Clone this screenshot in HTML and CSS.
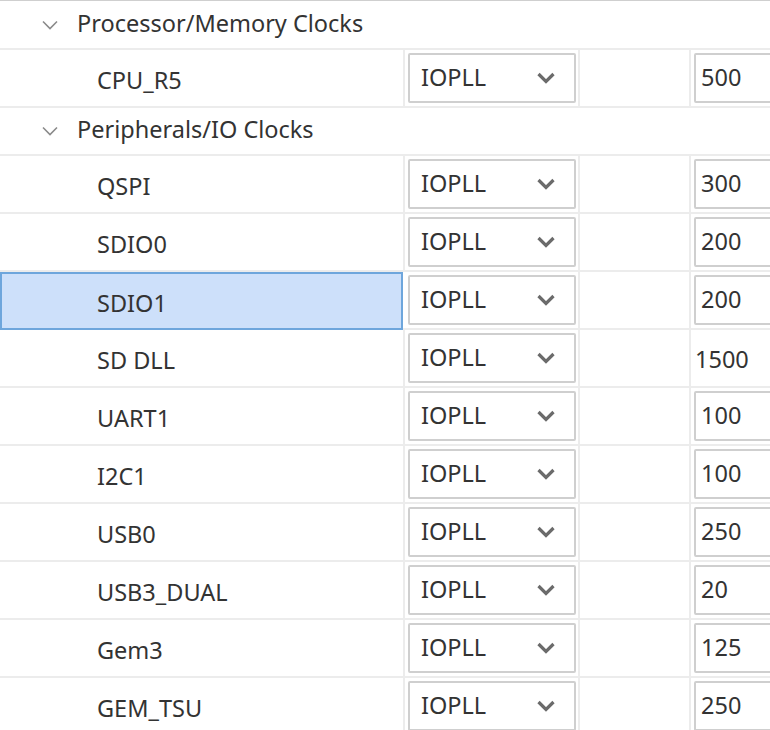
FILE: index.html
```html
<!DOCTYPE html>
<html>
<head>
<meta charset="utf-8">
<link rel="stylesheet" href="styles.css">
</head>
<body>
<div class="tree">
  <div class="section first">
    <svg class="twisty" width="16" height="10" viewBox="0 0 16 10"><path d="M1 1.5 L8 8.5 L15 1.5" fill="none" stroke="#8a8a8a" stroke-width="1.6"/></svg>
    <span>Processor/Memory Clocks</span>
  </div>
  <div class="row">
    <div class="cell name">CPU_R5</div>
    <div class="cell src"><div class="combo"><span>IOPLL</span><svg class="arrow" width="20" height="12" viewBox="0 0 20 12"><path d="M2.5 2 L10 9.5 L17.5 2" fill="none" stroke="#6b6b6b" stroke-width="3.2"/></svg></div></div>
    <div class="cell gap"></div>
    <div class="cell val"><div class="box">500</div></div>
  </div>
  <div class="section">
    <svg class="twisty" width="16" height="10" viewBox="0 0 16 10"><path d="M1 1.5 L8 8.5 L15 1.5" fill="none" stroke="#8a8a8a" stroke-width="1.6"/></svg>
    <span>Peripherals/IO Clocks</span>
  </div>
  <div class="row">
    <div class="cell name">QSPI</div>
    <div class="cell src"><div class="combo"><span>IOPLL</span><svg class="arrow" width="20" height="12" viewBox="0 0 20 12"><path d="M2.5 2 L10 9.5 L17.5 2" fill="none" stroke="#6b6b6b" stroke-width="3.2"/></svg></div></div>
    <div class="cell gap"></div>
    <div class="cell val"><div class="box">300</div></div>
  </div>
  <div class="row">
    <div class="cell name">SDIO0</div>
    <div class="cell src"><div class="combo"><span>IOPLL</span><svg class="arrow" width="20" height="12" viewBox="0 0 20 12"><path d="M2.5 2 L10 9.5 L17.5 2" fill="none" stroke="#6b6b6b" stroke-width="3.2"/></svg></div></div>
    <div class="cell gap"></div>
    <div class="cell val"><div class="box">200</div></div>
  </div>
  <div class="row">
    <div class="cell name selected">SDIO1</div>
    <div class="cell src"><div class="combo"><span>IOPLL</span><svg class="arrow" width="20" height="12" viewBox="0 0 20 12"><path d="M2.5 2 L10 9.5 L17.5 2" fill="none" stroke="#6b6b6b" stroke-width="3.2"/></svg></div></div>
    <div class="cell gap"></div>
    <div class="cell val"><div class="box">200</div></div>
  </div>
  <div class="row">
    <div class="cell name">SD DLL</div>
    <div class="cell src"><div class="combo"><span>IOPLL</span><svg class="arrow" width="20" height="12" viewBox="0 0 20 12"><path d="M2.5 2 L10 9.5 L17.5 2" fill="none" stroke="#6b6b6b" stroke-width="3.2"/></svg></div></div>
    <div class="cell gap"></div>
    <div class="cell val"><div class="plain">1500</div></div>
  </div>
  <div class="row">
    <div class="cell name">UART1</div>
    <div class="cell src"><div class="combo"><span>IOPLL</span><svg class="arrow" width="20" height="12" viewBox="0 0 20 12"><path d="M2.5 2 L10 9.5 L17.5 2" fill="none" stroke="#6b6b6b" stroke-width="3.2"/></svg></div></div>
    <div class="cell gap"></div>
    <div class="cell val"><div class="box">100</div></div>
  </div>
  <div class="row">
    <div class="cell name">I2C1</div>
    <div class="cell src"><div class="combo"><span>IOPLL</span><svg class="arrow" width="20" height="12" viewBox="0 0 20 12"><path d="M2.5 2 L10 9.5 L17.5 2" fill="none" stroke="#6b6b6b" stroke-width="3.2"/></svg></div></div>
    <div class="cell gap"></div>
    <div class="cell val"><div class="box">100</div></div>
  </div>
  <div class="row">
    <div class="cell name">USB0</div>
    <div class="cell src"><div class="combo"><span>IOPLL</span><svg class="arrow" width="20" height="12" viewBox="0 0 20 12"><path d="M2.5 2 L10 9.5 L17.5 2" fill="none" stroke="#6b6b6b" stroke-width="3.2"/></svg></div></div>
    <div class="cell gap"></div>
    <div class="cell val"><div class="box">250</div></div>
  </div>
  <div class="row">
    <div class="cell name">USB3_DUAL</div>
    <div class="cell src"><div class="combo"><span>IOPLL</span><svg class="arrow" width="20" height="12" viewBox="0 0 20 12"><path d="M2.5 2 L10 9.5 L17.5 2" fill="none" stroke="#6b6b6b" stroke-width="3.2"/></svg></div></div>
    <div class="cell gap"></div>
    <div class="cell val"><div class="box">20</div></div>
  </div>
  <div class="row">
    <div class="cell name">Gem3</div>
    <div class="cell src"><div class="combo"><span>IOPLL</span><svg class="arrow" width="20" height="12" viewBox="0 0 20 12"><path d="M2.5 2 L10 9.5 L17.5 2" fill="none" stroke="#6b6b6b" stroke-width="3.2"/></svg></div></div>
    <div class="cell gap"></div>
    <div class="cell val"><div class="box">125</div></div>
  </div>
  <div class="row">
    <div class="cell name">GEM_TSU</div>
    <div class="cell src"><div class="combo"><span>IOPLL</span><svg class="arrow" width="20" height="12" viewBox="0 0 20 12"><path d="M2.5 2 L10 9.5 L17.5 2" fill="none" stroke="#6b6b6b" stroke-width="3.2"/></svg></div></div>
    <div class="cell gap"></div>
    <div class="cell val"><div class="box">250</div></div>
  </div>
</div>
</body>
</html>
```
FILE: styles.css
```css
html, body {
  margin: 0;
  padding: 0;
  background: #ffffff;
  overflow: hidden;
}
body {
  font-family: "Noto Sans", "Open Sans", sans-serif;
  font-size: 23.5px;
  color: #333333;
  width: 770px;
  height: 730px;
}
.tree {
  border-top: 1px solid #cfcfcf;
  width: 800px;
}
.section {
  display: flex;
  align-items: center;
  height: 48px;
  padding-bottom: 4px;
  border-bottom: 2px solid #ececec;
  box-sizing: border-box;
}
.section.first {
  height: 49px;
}
.section .twisty {
  margin-left: 42px;
  margin-right: 19px;
  margin-top: 4px;
}
.row {
  display: grid;
  grid-template-columns: 405px 175px 111px 1fr;
  height: 58px;
  border-bottom: 2px solid #ececec;
  box-sizing: border-box;
}
.cell {
  border-right: 2px solid #ececec;
  display: flex;
  align-items: center;
  box-sizing: border-box;
}
.cell.val {
  border-right: none;
}
.name {
  padding-left: 97px;
  padding-top: 4px;
}
.name.selected {
  background: #cde0fa;
  border: 2px solid #6ea6dc;
  padding-left: 95px;
  margin-right: 2px;
  margin-bottom: -2px;
}
.src {
  padding: 2px 2px 2px 3px;
}
.combo {
  flex: 1;
  height: 50px;
  border: 2px solid #cfcfcf;
  border-radius: 2px;
  box-sizing: border-box;
  display: flex;
  align-items: center;
  padding-left: 11px;
  padding-right: 18px;
  justify-content: space-between;
}
.combo span {
  padding-bottom: 3px;
}
.val {
  padding-left: 3px;
}
.box {
  flex: 1;
  height: 50px;
  border: 2px solid #cfcfcf;
  border-radius: 2px;
  box-sizing: border-box;
  display: flex;
  align-items: center;
  padding-left: 5px;
  padding-bottom: 2px;
}
.plain {
  padding-left: 1px;
  padding-top: 2px;
}
```
